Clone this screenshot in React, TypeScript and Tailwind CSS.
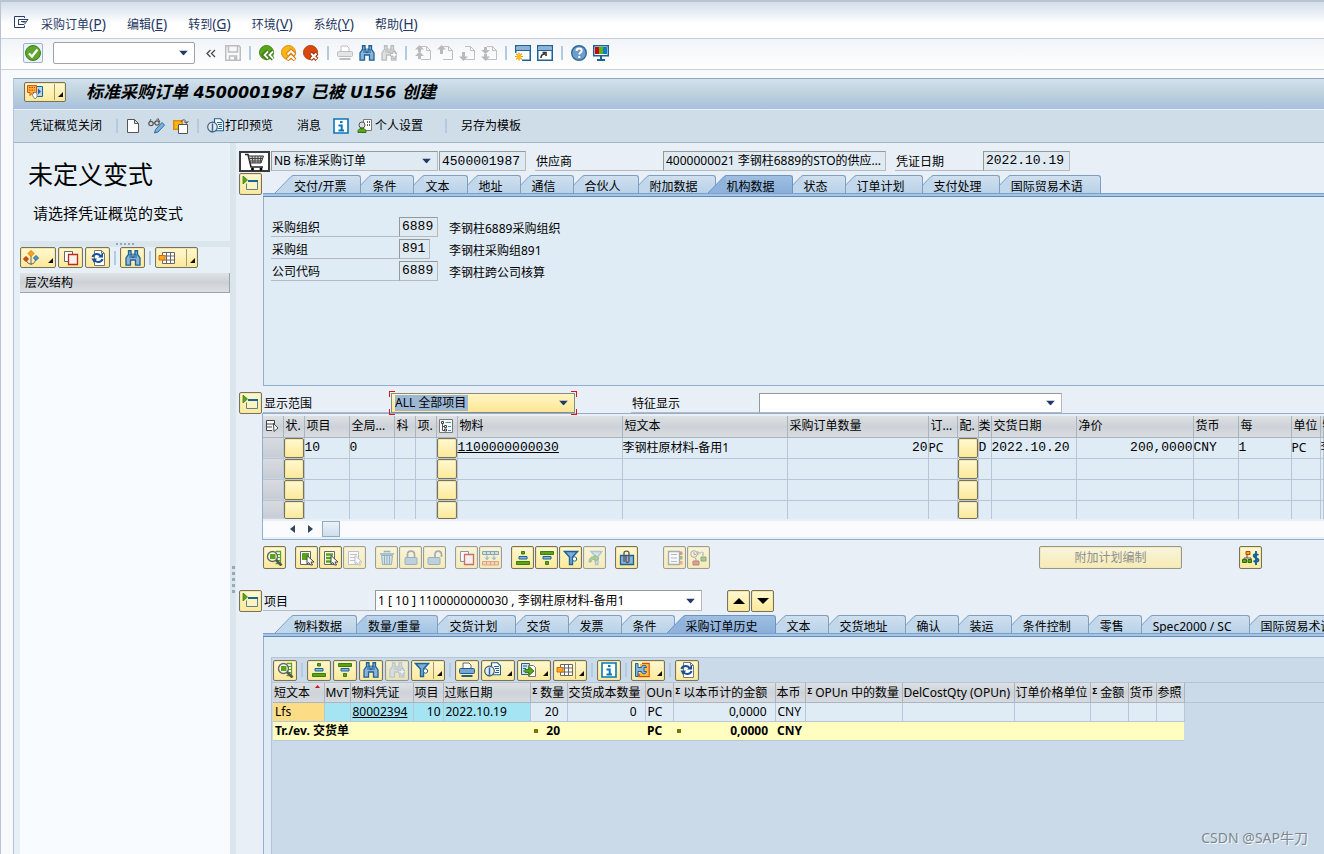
import type { ReactNode } from "react";

const YELLOW =
  "border border-[#77725c] bg-linear-to-b from-[#fff8d2] to-[#fde998] shadow-[inset_0_0_0_1px_#f6e6a4] rounded-[2px]";
const FIELD = "border border-[#b5babd] border-t-[#94999c] border-l-[#94999c]";
const MONO = "font-['Liberation_Mono','Noto_Sans_CJK_SC',monospace] text-[13px]";

/* ---------- icons ---------- */

function Svg({ children, w = 16, h = 16 }: { children: ReactNode; w?: number; h?: number }) {
  return (
    <svg width={w} height={h} viewBox={`0 0 ${w} ${h}`} fill="none" className="shrink-0" aria-hidden="true">
      {children}
    </svg>
  );
}

const IconExit = () => (
  <Svg w={15} h={12}>
    <path d="M10.500 2V.500H.500v11h10V9.500" stroke="#2b3e63" />
    <path d="M4.500 9V3.500h9.500L12 6H8.500" stroke="#2b3e63" />
    <path d="M7 5.500h4.500M4.500 8.500H10l2-2" stroke="#2b3e63" />
  </Svg>
);
const IconCheck = () => (
  <Svg>
    <circle cx="8" cy="8" r="7.500" fill="#5da52b" stroke="#3c8020" />
    <path d="M4 8.500l3 3L12.500 4.500" stroke="#fff" strokeWidth="2.400" />
  </Svg>
);
const IconSave = () => (
  <Svg>
    <path d="M.75.75h13l1.500 1.500v13H.75z" stroke="#bdbdbd" strokeWidth="1.500" />
    <path d="M3.500 1v6h9V1M4.500 15v-4h7v4" stroke="#bdbdbd" strokeWidth="1.500" />
    <path d="M9 12h2v3H9z" fill="#bdbdbd" />
  </Svg>
);
const IconBack = () => (
  <Svg>
    <circle cx="7.500" cy="7.500" r="7" fill="#58a618" stroke="#46861a" />
    <path d="M9 6l-4 4 4 4M14 6l-4 4 4 4" stroke="#3a7b16" strokeWidth="4" />
    <path d="M9 6.500L5.500 10 9 13.500M14 6.500L10.500 10l3.500 3.500" stroke="#fff" strokeWidth="1.800" />
  </Svg>
);
const IconUp = () => (
  <Svg>
    <circle cx="7.500" cy="7.500" r="7" fill="#fbb614" stroke="#d98a13" />
    <path d="M6 10l4-4 4 4M6 15l4-4 4 4" stroke="#d97f13" strokeWidth="4" />
    <path d="M6.500 9.500L10 6l3.500 3.500M6.500 14.500L10 11l3.500 3.500" stroke="#fff" strokeWidth="1.800" />
  </Svg>
);
const IconCancel = () => (
  <Svg>
    <circle cx="7.500" cy="7.500" r="7" fill="#d9480f" stroke="#b63c0d" />
    <path d="M7.500 8l6.500 6.500M14 8l-6.500 6.500" stroke="#a8330a" strokeWidth="4" />
    <path d="M8 8.500l5.500 5.500M13.500 8.500L8 14" stroke="#fff" strokeWidth="2" />
  </Svg>
);
const IconPrint = ({ off = false }: { off?: boolean }) => (
  <Svg>
    <path d="M4 6V1h6l2 2v3" fill="#fff" stroke={off ? "#bdbdbd" : "#666"} />
    <rect x=".500" y="6.500" width="15" height="5" rx="1" fill={off ? "#e4e4e4" : "#7ba5ca"} stroke={off ? "#bdbdbd" : "#1d5f91"} />
    <path d="M2.500 14h11" stroke={off ? "#bdbdbd" : "#1d5f91"} strokeWidth="2" />
  </Svg>
);
const IconFind = ({ off = false, more = false }: { off?: boolean; more?: boolean }) => {
  const line = off ? "#b9bdbd" : "#1e6296";
  const fill = off ? "#e0e0dc" : "#8db4d8";
  return (
    <Svg>
      <path d="M3.500 .750h2.500v3.500h1v3h2v-3h1V.750h2.500v3.500L15 8v7.200h-4.500V10H5.500v5.200H1V8l2.500-3.700z" fill={fill} stroke={line} strokeWidth="1.300" />
      <path d="M5 4v4M11 4v4" stroke={line} />
      {more && <path d="M9.500 8.500h2.500v-2h2v2h2v2.500h-2v2.500h-2V11H9.500z" fill="#fff" stroke="#b5b5b5" />}
    </Svg>
  );
};
const IconPage = ({ kind }: { kind: "first" | "prev" | "next" | "last" }) => (
  <Svg>
    <path d="M6 1.500h5.500l4 4V14.500H6M11.500 1.500v4h4" stroke="#c0c0c0" />
    {kind === "first" && <path d="M4.500 0l4.500 4.500H6V7H3V4.500H0zM4.500 6.500L9 11H6v3H3v-3H0z" fill="#bababa" />}
    {kind === "prev" && <path d="M4.500 0L9 4.500H6V9H3V4.500H0z" fill="#bababa" />}
    {kind === "next" && <path d="M4.500 16L9 11.500H6V7H3v4.500H0z" fill="#bababa" />}
    {kind === "last" && <path d="M4.500 16L9 11.500H6V9H3v2.500H0zM4.500 9L9 5H6V2H3v3H0z" fill="#bababa" />}
  </Svg>
);
const IconWindow = ({ link = false }: { link?: boolean }) => (
  <Svg>
    <path d="M.750.750h14.500v14.500H.750z" fill="#fff" stroke="#1d6298" strokeWidth="1.500" />
    <path d="M1.500 1.500h13V5h-13z" fill="#8cb4da" />
    <path d="M1 5.500h14" stroke="#1d6298" />
    {link ? (
      <path d="M4 13c0-3 1.500-4 4-4M5.500 7.500H9V11" stroke="#333" strokeWidth="1.600" />
    ) : (
      <>
        <path d="M0 8h7v8H0z" fill="#fff" />
        <path d="M4 7.500v8M0 11.500h8M1.200 8.700l5.600 5.600M6.800 8.700l-5.600 5.600" stroke="#f08a00" strokeWidth="1.200" />
        <circle cx="4" cy="11.500" r="2.300" fill="#ffc21a" />
      </>
    )}
  </Svg>
);
const IconHelp = () => (
  <Svg>
    <circle cx="8" cy="8" r="7.300" fill="#6f9cc8" stroke="#2c6a9e" strokeWidth="1.400" />
    <path d="M5.500 6c0-1.600 1-2.500 2.600-2.500s2.600.900 2.600 2.300c0 1.700-2.400 1.700-2.400 3.700" stroke="#fff" strokeWidth="1.900" />
    <path d="M7.300 11h2v2h-2z" fill="#fff" />
  </Svg>
);
const IconMonitor = () => (
  <Svg>
    <path d="M.750 .750h14.500v10H.750z" fill="#fff" stroke="#1d6298" strokeWidth="1.500" />
    <path d="M2 2h4v7H2z" fill="#d40000" />
    <path d="M6 2h4v7H6z" fill="#5bb512" />
    <path d="M10 2h4v7h-4z" fill="#0d7fc4" />
    <path d="M8 11v3M4 15h8" stroke="#1d6298" strokeWidth="2" />
  </Svg>
);
const IconOrder = () => (
  <Svg w={17}>
    <path d="M8.500 2.500h7v10h-7z" fill="#b9d5ea" stroke="#156aa0" />
    <path d="M11 4.500l3 3-3 3z" fill="#156aa0" />
    <path d="M.500 1.500h9v7H6l-3 3v-3H.500z" fill="#fbb03a" stroke="#d9530d" />
    <path d="M2 3.500h6M2 6h6" stroke="#c4430b" strokeDasharray="1.500 1" />
    <path d="M5 11l3-3 2 2v3l-2 2z" fill="#fff" stroke="#888" />
  </Svg>
);
const IconNew = () => (
  <Svg w={14}>
    <path d="M1.500 1.500h7l4 4v9h-11zM8.500 1.500v4h4" fill="#fff" stroke="#555" />
  </Svg>
);
const IconGlasses = () => (
  <Svg w={17}>
    <path d="M1.500 4l1.500-3M5 5h2M8.500 2l1.500-1.500L12 4" stroke="#555" />
    <circle cx="3" cy="5.500" r="2.200" stroke="#555" strokeWidth="1.200" />
    <circle cx="9" cy="5" r="2.200" stroke="#555" strokeWidth="1.200" />
    <path d="M6.500 15l1-3.500 6.500-7 2.500 2.500-6.500 7z" fill="#7fb0d8" stroke="#246b9f" />
  </Svg>
);
const IconCopyOther = () => (
  <Svg>
    <path d="M.750 2.750h8.500v8.500H.750z" fill="#fbb614" stroke="#e08b00" strokeWidth="1.500" />
    <path d="M5.500 6.500h9v9h-9z" fill="#fff" stroke="#555" />
    <path d="M8 4c1-3 5-3 5.500 1M11 3.500l2.500 2 2-2.500" stroke="#555" />
  </Svg>
);
const IconPreview = () => (
  <Svg w={17}>
    <path d="M7.500.750h6l3 3v9h-9z" fill="#fff" stroke="#1d6298" strokeWidth="1.200" />
    <path d="M10 4.500h5M11 6.500h4M12 8.500h3M11 10.500h4" stroke="#1d6298" />
    <circle cx="5.500" cy="9" r="4.800" fill="#e4edf4" stroke="#4d5a66" strokeWidth="1.200" />
    <path d="M5.500 5.500v7M3.500 13.500h3" stroke="#246b9f" strokeWidth="1.500" />
  </Svg>
);
const IconInfo = () => (
  <Svg>
    <path d="M1 1h14v14H1z" fill="#fff" stroke="#0b76b8" strokeWidth="1.600" />
    <path d="M7 4h2.500M5.500 7.500h3.200v5M5.500 12.500h5.500" stroke="#0b76b8" strokeWidth="2" />
  </Svg>
);
const IconPerson = () => (
  <Svg>
    <path d="M6.500 1.500h8v11h-8z" fill="#fff" stroke="#777" />
    <path d="M10 4h1M12 4h1M10 7h1M12 7h1" stroke="#333" strokeWidth="1.500" />
    <circle cx="5" cy="7" r="3" fill="#dedede" stroke="#555" />
    <path d="M1 14.500v-2l2-2h4l2 2v2z" fill="#58a618" stroke="#376f14" />
  </Svg>
);
const IconVariant = () => (
  <Svg>
    <path d="M8 6v9M8 14C5 14 4 12 3.500 11M8 14c3 0 4-2 4.500-4" stroke="#666" />
    <path d="M8 .500L11 3.500 8 6.500l-3-3z" fill="#f9a51a" stroke="#de7b00" />
    <path d="M3 6.500L5.500 9 3 11.500.500 9z" fill="#d9480f" stroke="#a93608" />
    <path d="M13 5.500L15.500 8 13 10.500 10.500 8z" fill="#5c93c5" stroke="#1d6298" />
  </Svg>
);
const IconCopy = () => (
  <Svg>
    <path d="M1.500 1.500h8v10h-8z" fill="#fff" stroke="#666" />
    <path d="M5.500 4.500h9v10h-9z" fill="#f7f1ef" stroke="#bd2a17" strokeWidth="1.300" />
  </Svg>
);
const IconRefresh = () => (
  <Svg>
    <path d="M4.500.500h7l3 3v12h-10zM11.500.500v3h3" fill="#fff" stroke="#777" />
    <path d="M2.500 7c1-3.500 6-4 8-1M12.500 9c-1 3.500-6 4-8 1" stroke="#17509a" strokeWidth="2" />
    <path d="M8 7.500h5V3zM7 8.500H1.500L4 13z" fill="#17509a" />
  </Svg>
);
const IconLayout = () => (
  <Svg w={17}>
    <path d="M4.500 2.500h12v11h-12zM4.500 6h12M4.500 10h12M8.500 2.500v11M12.500 2.500v11" fill="#fff" stroke="#666" />
    <path d="M1 5.500h6v4.500H1z" fill="#fba91c" stroke="#e0690c" />
  </Svg>
);
const IconExpand = () => (
  <Svg w={17}>
    <path d="M1 0l4.500 4L1 8z" fill="#58a618" stroke="#3d7d16" strokeWidth=".8" />
    <path d="M4.500 13.500v-6M4.500 13.500h11V4.500h-9" fill="#fdf3c0" stroke="#5d8193" />
    <path d="M6 5h10" stroke="#0f699f" strokeWidth="2" />
  </Svg>
);
const IconCart = () => (
  <Svg w={22} h={18}>
    <path d="M1 1.500h3L7 14h12" stroke="#222" strokeWidth="1.500" />
    <path d="M4.500 3h15L17 10H6.500z" fill="#d2d2d2" stroke="#333" />
    <path d="M8 3l1 7M11 3v7M14 3v7M17 3l-1 7M5 5.500h14M6 8h12" stroke="#444" />
    <circle cx="8.500" cy="16" r="1.500" fill="#000" />
    <circle cx="17" cy="16" r="1.500" fill="#000" />
  </Svg>
);
const IconDetail = () => (
  <Svg w={17}>
    <path d="M9.500 1.500h5v12h-5" fill="#fff" stroke="#58a618" strokeWidth="1.300" />
    <path d="M10 4.500h4M11 7.500h3M11 10.500h3" stroke="#58a618" />
    <circle cx="6.500" cy="6.500" r="5" fill="#f5f5ee" stroke="#666" strokeWidth="1.400" />
    <path d="M4 4h5.500v5H4z" fill="#58a618" />
    <path d="M10 10l5.500 5.500" stroke="#555" strokeWidth="2.600" />
  </Svg>
);
const IconSelect = ({ kind }: { kind: "block" | "all" | "none" }) => (
  <Svg>
    <path d="M1.500 1.500h10v13h-10z" fill="#fff" stroke={kind === "none" ? "#aaa" : "#666"} />
    {kind === "block" && <path d="M3 3h7v7H3z" fill="#58a618" />}
    {kind === "all" && <path d="M3 4.500h7M3 8h7M3 11.500h5" stroke="#58a618" strokeWidth="2.400" />}
    {kind === "none" && <path d="M3 4.500h7M3 7.500h7M3 10.500h5" stroke="#aaa" />}
    <path d="M8 5.500l7 6.500h-3l1.500 3h-2L10 12.500l-2 1.500z" fill="#fff" stroke={kind === "none" ? "#aaa" : "#444"} />
  </Svg>
);
const IconTrash = () => (
  <Svg>
    <path d="M5.500 2.500v-1h5v1M1 4h14" stroke="#6a93a8" strokeWidth="1.500" />
    <path d="M2.500 5.500h11l-1 9h-9z" fill="#c6d8df" stroke="#6a93a8" />
    <path d="M5.500 6v8M8 6v8M10.500 6v8" stroke="#6a93a8" />
  </Svg>
);
const IconLock = ({ open = false }: { open?: boolean }) => (
  <Svg>
    {open ? (
      <path d="M8 7.500V4.500C8 0 14.500 0 14.500 4.500V7" stroke="#888" strokeWidth="1.700" />
    ) : (
      <path d="M4.500 7.500V4.500C4.500 0 11.500 0 11.500 4.500v3" stroke="#888" strokeWidth="1.700" />
    )}
    <rect x={open ? 1 : 2} y="7.500" width="12" height="7" rx="1" fill="#a9c1cf" stroke="#6a93a8" />
  </Svg>
);
const IconTransfer = () => (
  <Svg w={17}>
    <path d="M.500 1.500h16v3H.500zM4.500 1.500v3M8.500 1.500v3M12.500 1.500v3" stroke="#547b91" fill="#c6d8df" />
    <path d="M5 5.500v4M3 7.500l2 2 2-2M12 5.500v4M10 7.500l2 2 2-2" stroke="#4f87ab" />
    <path d="M.500 11.500h16v3.500H.500zM4.500 11.500V15M8.500 11.500V15M12.500 11.500V15" stroke="#dc7a4c" fill="#f8c895" />
  </Svg>
);
const IconSort = ({ down = false }: { down?: boolean }) =>
  down ? (
    <Svg>
      <path d="M1.500 1.500h13v3h-13z" fill="#58a618" stroke="#3d7d16" />
      <path d="M4 6.500h8v2.500H4z" fill="#8cb4da" stroke="#1d6298" />
      <path d="M6.500 11.500h3v3h-3z" fill="#58a618" stroke="#3d7d16" />
    </Svg>
  ) : (
    <Svg>
      <path d="M6.500 1.500h3v2.500h-3z" fill="#58a618" stroke="#3d7d16" />
      <path d="M4 6.500h8v2.500H4z" fill="#8cb4da" stroke="#1d6298" />
      <path d="M1.500 11.500h13v3h-13z" fill="#58a618" stroke="#3d7d16" />
    </Svg>
  );
const IconFilter = ({ off = false }: { off?: boolean }) => (
  <Svg>
    <path
      d={off ? "M4 1.500h11l-4 5v8H8.500v-8z" : "M1.500 1.500h13l-5 5.500v7.500h-3V7z"}
      fill={off ? "#cddcdf" : "#7badd8"}
      stroke={off ? "#94b0b8" : "#1d6298"}
      strokeWidth="1.400"
    />
    {off ? (
      <path d="M2 12c0-4 3-6 6-5V5l4 3.500-4 3V9.500C6 9 4 10 4 12z" fill="#8cbb71" stroke="#6f9c5e" />
    ) : (
      <circle cx="11.500" cy="9" r="2.200" fill="#fff" stroke="#1d6298" />
    )}
  </Svg>
);
const IconClip = () => (
  <Svg>
    <path d="M1.500 5.500h13v9h-13z" fill="#8cb4da" stroke="#1d6298" strokeWidth="1.300" />
    <path d="M5 12V3c0-2.500 5-2.500 5 0v8c0 2-3 2-3 0V5" stroke="#555" strokeWidth="1.300" />
  </Svg>
);
const IconNotebook = () => (
  <Svg>
    <path d="M1.500 1.500h11v13h-11z" fill="#fff" stroke="#888" strokeWidth="1.400" />
    <path d="M4 4.500h6M4 8h6M4 11.500h6" stroke="#999" />
    <path d="M13 1.500h2.500V5H13z" fill="#cf6a50" />
    <path d="M13 6h2.500v3.500H13z" fill="#6f9f58" />
    <path d="M13 11h2.500v3.500H13z" fill="#ea8a5c" />
  </Svg>
);
const IconWeights = () => (
  <Svg w={17}>
    <circle cx="4" cy="4" r="3.300" stroke="#888" />
    <path d="M4 2v2.500h2M8 5V1.500l2 2 2-2M6 11V8.500h-1M13 6V2" stroke="#888" />
    <path d="M3 11h6v4H3z" fill="#d9745a" stroke="#a95040" />
    <path d="M11 7h5v4h-5z" fill="#86b86c" stroke="#578443" />
  </Svg>
);
const IconCost = () => (
  <Svg w={18}>
    <path d="M5 5v3M2 10V8h7v2" stroke="#555" />
    <path d="M4 1.500h4v3H4z" fill="#fba91c" stroke="#c63b0a" />
    <path d="M.500 9.500h4v3h-4zM6 9.500h3.500v3H6z" fill="#58a618" stroke="#2f6a12" />
    <path d="M16.500 5c-5-2.500-6.500 1.500-2.500 3s3 5-2.500 3M14 1v14" stroke="#0e62a0" strokeWidth="1.900" />
  </Svg>
);
const IconTriangle = ({ down = false }: { down?: boolean }) => (
  <Svg w={12} h={6}>
    <path d={down ? "M0 0h12L6 6z" : "M0 6h12L6 0z"} fill="#000" />
  </Svg>
);
const IconExport = () => (
  <Svg w={17}>
    <path d="M1.500 1.500h8v11h-8z" fill="#cfe0ee" stroke="#1d6298" />
    <path d="M3 4h4M3 6.500h3M3 9h3" stroke="#1d6298" />
    <path d="M8.500 3.500h5l2 2v9h-7z" fill="#fff" stroke="#777" />
    <path d="M5 7.500h4V4.500l5 4.500-5 4.500v-3H5z" fill="#58a618" stroke="#3d7d16" />
  </Svg>
);
const IconService = () => (
  <Svg w={17}>
    <path d="M8 1.500h7v13H5v-3" stroke="#dd4a0c" strokeWidth="1.600" />
    <path d="M6 2h8.500v12H6z" fill="#fdbf3a" />
    <path d="M1.500 1.500H4v4h3.500c0-3 5-3 5 0H10v4h2.500c0 3-5 3-5 0H4v5H1.500z" fill="#8cb4da" stroke="#1d6298" />
  </Svg>
);
const IconConfig = () => (
  <Svg w={14} h={14}>
    <path d="M.500.500h13v13H.500z" fill="#f4f8fb" stroke="#777" />
    <path d="M3.500 4v7.500H6M3.500 7.500H6" stroke="#555" />
    <path d="M2.500 2.500h2v2h-2zM5.500 6.500h2v2h-2zM5.500 10h2v2h-2z" fill="#fff" stroke="#444" />
    <path d="M6.500 3.500H12M9 7.500h3M9 11.500h3" stroke="#4790b8" />
  </Svg>
);
const IconColumns = () => (
  <Svg w={14} h={12}>
    <path d="M9.500 4V.500h-8v10H7M1.500 4H9M1.500 7H7" fill="#fff" stroke="#444" />
    <path d="M8.500 3.500l4.500 4.500-4 3.500z" fill="#fff" stroke="#444" />
  </Svg>
);
const Caret = () => (
  <svg width="9" height="5" viewBox="0 0 9 5" className="pointer-events-none absolute top-1/2 right-1.5 -translate-y-1/2">
    <path d="M0 0h9L4.500 5z" fill="#21396b" />
  </svg>
);

/* ---------- controls ---------- */

function BarSep() {
  return (
    <span className="flex w-1.5 shrink-0 justify-center">
      <span className="h-3.5 w-0.5 bg-[#b3cbe2]" />
    </span>
  );
}

function ToolButton({ label, children }: { label: string; children: ReactNode }) {
  return (
    <button type="button" aria-label={label} className="flex size-4 shrink-0 items-center justify-center">
      {children}
    </button>
  );
}

function YButton({
  label,
  children,
  size = "w-[23px] h-[23px]",
  off = false,
  menu = false,
  split = false,
}: {
  label: string;
  children: ReactNode;
  size?: string;
  off?: boolean;
  menu?: boolean;
  split?: boolean;
}) {
  return (
    <button
      type="button"
      aria-label={label}
      disabled={off}
      className={`relative flex shrink-0 items-center ${menu || split ? "justify-start pl-0.5" : "justify-center"} ${size} ${YELLOW} ${off ? "opacity-65" : ""}`}
    >
      {children}
      {split && <span className="absolute inset-y-px right-2.5 w-px bg-[#a79b6c]" />}
      {(menu || split) && (
        <svg width="5" height="5" viewBox="0 0 5 5" className="absolute right-0.5 bottom-1">
          <path d="M5 0v5H0z" fill="#111" />
        </svg>
      )}
    </button>
  );
}

function Select({ id, label, value, className }: { id: string; label?: string; value: string; className: string }) {
  return (
    <div className={`relative shrink-0 ${FIELD} ${className}`}>
      <select id={id} aria-label={label} className="h-full w-full appearance-none bg-transparent pr-4 pl-0.5 outline-none" defaultValue={value}>
        <option>{value}</option>
      </select>
      <Caret />
    </div>
  );
}

function Label({ id, text, className }: { id: string; text: string; className: string }) {
  return (
    <label htmlFor={id} className={`flex shrink-0 items-end self-stretch border-b border-[#b4bac0] pl-px leading-[17px] ${className}`}>
      {text}
    </label>
  );
}

function ReadField({ id, value, className }: { id: string; value: string; className: string }) {
  return <input id={id} readOnly value={value} className={`shrink-0 bg-[#dfeaf3] px-0.5 outline-none ${FIELD} ${className}`} />;
}

function Tab({ label, state, order }: { label: string; state: "idle" | "near" | "active"; order: number }) {
  const active = state === "active";
  const fill = active ? "#90b3dd" : state === "near" ? "#a9c8e6" : "#c1d7ec";
  const body = active
    ? "bg-linear-to-b from-[#9fbfe2] to-[#88aed9] border-[#6d94c1]"
    : state === "near"
      ? "bg-linear-to-b from-[#bdd5eb] to-[#a3c4e4] border-[#7f9fc0]"
      : "bg-linear-to-b from-[#cfe0ef] to-[#b9d1e8] border-[#7f9fc0]";
  return (
    <button
      type="button"
      role="tab"
      aria-selected={active}
      className="group relative -ml-2 flex h-[18px] shrink-0 first:ml-0"
      style={{ zIndex: order }}
    >
      <svg width="18" height="18" viewBox="0 0 18 18" className="shrink-0">
        <path d="M0 18L16 1.500 18 .500V18z" fill={fill} />
        <path d="M0 18L16 1.500 18 .500" fill="none" stroke={active ? "#6d94c1" : "#7f9fc0"} />
      </svg>
      <span className={`flex h-full items-center rounded-tr-[3px] border-t border-r pt-1 pr-[17px] pl-px whitespace-nowrap group-first:pr-3.5 ${body}`}>
        {label}
      </span>
    </button>
  );
}

function TabStrip({ tabs, active, near }: { tabs: string[]; active: string; near?: string }) {
  return (
    <>
      <div role="tablist" className="isolate flex overflow-hidden pt-0.5 pl-3">
        {tabs.map((t, i) => (
          <Tab
            key={t}
            label={t}
            state={t === active ? "active" : t === near ? "near" : "idle"}
            order={t === active ? tabs.length + 1 : tabs.length - i}
          />
        ))}
      </div>
      <div className="h-1 border-t border-b border-t-[#7a9fca] border-b-[#5f8cbd] bg-[#a6c4e4]" />
    </>
  );
}

function Section({ children, className = "" }: { children: ReactNode; className?: string }) {
  return (
    <section className={`flex ${className}`}>
      <div className="w-6 shrink-0">
        <YButton label="展开" size="w-[23px] h-[22px]">
          <IconExpand />
        </YButton>
      </div>
      <div className="flex min-w-0 flex-1 flex-col">{children}</div>
    </section>
  );
}

/* ---------- data ---------- */

const menus = [
  ["采购订单", "P"],
  ["编辑", "E"],
  ["转到", "G"],
  ["环境", "V"],
  ["系统", "Y"],
  ["帮助", "H"],
];

const headerTabs = ["交付/开票", "条件", "文本", "地址", "通信", "合伙人", "附加数据", "机构数据", "状态", "订单计划", "支付处理", "国际贸易术语"];

const itemTabs = [
  "物料数据", "数量/重量", "交货计划", "交货", "发票", "条件", "采购订单历史", "文本",
  "交货地址", "确认", "装运", "条件控制", "零售", "Spec2000 / SC", "国际贸易术语",
];

const orgFields = [
  { id: "org", label: "采购组织", value: "6889", width: "w-[39px]", text: "李钢柱6889采购组织" },
  { id: "group", label: "采购组", value: "891", width: "w-[31px]", text: "李钢柱采购组891" },
  { id: "company", label: "公司代码", value: "6889", width: "w-[39px]", text: "李钢柱跨公司核算" },
];

type ItemCol = { w: string; head: ReactNode; cell?: string; kind?: "row" | "button"; style?: string };

const itemCols: ItemCol[] = [
  { w: "w-5", head: <IconColumns />, kind: "row" },
  { w: "w-[21px]", head: "状.", kind: "button" },
  { w: "w-[45px]", head: "项目", cell: "10", style: MONO },
  { w: "w-[45px]", head: "全局...", cell: "0", style: MONO },
  { w: "w-[21px]", head: "科" },
  { w: "w-[21px]", head: "项." },
  { w: "w-[21px]", head: <IconConfig />, kind: "button" },
  { w: "w-[165px]", head: "物料", cell: "1100000000030", style: MONO + " underline" },
  { w: "w-[165px]", head: "短文本", cell: "李钢柱原材料-备用1" },
  { w: "w-[141px]", head: "采购订单数量", cell: "20", style: MONO + " text-right" },
  { w: "w-[29px]", head: "订...", cell: "PC" },
  { w: "w-[21px]", head: "配.", kind: "button" },
  { w: "w-[13px]", head: "类", cell: "D", style: MONO },
  { w: "w-[85px]", head: "交货日期", cell: "2022.10.20", style: MONO },
  { w: "w-[117px]", head: "净价", cell: "200,0000", style: MONO + " text-right" },
  { w: "w-[45px]", head: "货币", cell: "CNY", style: MONO },
  { w: "w-[53px]", head: "每", cell: "1", style: MONO },
  { w: "w-[29px]", head: "单位", cell: "PC" },
  { w: "", head: "物", cell: "李" },
];

type HistCol = { w: string; head: string; cell?: string; total?: string; sum?: boolean; style?: string };

const histCols: HistCol[] = [
  { w: "w-[51px]", head: "短文本", cell: "Lfs", style: "bg-[#fcdc84]" },
  { w: "w-[26px]", head: "MvT", style: "bg-[#a5e5f3]" },
  { w: "w-[63px]", head: "物料凭证", cell: "80002394", style: "bg-[#a5e5f3] underline" },
  { w: "w-[30px]", head: "项目", cell: "10", style: "bg-[#a5e5f3] text-right" },
  { w: "w-[87px]", head: "过账日期", cell: "2022.10.19", style: "bg-[#a5e5f3]" },
  { w: "w-[37px]", head: "数量", cell: "20", total: "20", sum: true, style: "text-right" },
  { w: "w-[78px]", head: "交货成本数量", cell: "0", style: "text-right" },
  { w: "w-[28px]", head: "OUn", cell: "PC", total: "PC" },
  { w: "w-[102px]", head: "以本币计的金额", cell: "0,0000", total: "0,0000", sum: true, style: "text-right" },
  { w: "w-[30px]", head: "本币", cell: "CNY", total: "CNY" },
  { w: "w-[97px]", head: "OPUn 中的数量", sum: true },
  { w: "w-[112px]", head: "DelCostQty (OPUn)" },
  { w: "w-[76px]", head: "订单价格单位" },
  { w: "w-[38px]", head: "金额", sum: true },
  { w: "w-[28px]", head: "货币" },
  { w: "w-[28px]", head: "参照" },
];

/* ---------- page parts ---------- */

function MenuBar() {
  return (
    <nav className="flex h-[37px] items-center border-b border-[#c9d0db] bg-linear-to-b from-[#d3deeb] to-white to-60% pt-2 pl-[13px] text-[#1f3864]">
      <button type="button" aria-label="系统菜单" className="mr-3 -mt-1">
        <IconExit />
      </button>
      <div className="flex gap-[21px]">
        {menus.map(([name, key]) => (
          <button type="button" key={key} className="whitespace-nowrap">
            {name}
            <span className="text-sm leading-4">
              (<span className="underline">{key}</span>)
            </span>
          </button>
        ))}
      </div>
    </nav>
  );
}

function SystemBar() {
  return (
    <div className="flex h-[31px] items-center gap-1.5 border-b border-[#c9d0db] bg-linear-to-b from-[#f1f4f8] to-white pb-0.5 pl-[22px]">
      <button type="button" aria-label="回车" className="flex size-5 items-center justify-center rounded-[2px] border border-[#9fb4cc] bg-[#edf2f8]">
        <IconCheck />
      </button>
      <div className="relative ml-1 h-[22px] w-[142px] rounded-[2px] border border-[#a0a4a8] bg-white">
        <input aria-label="命令" className="h-full w-full bg-transparent px-1 pr-4 outline-none" />
        <Caret />
      </div>
      <button type="button" aria-label="收起" className="mr-0.5 ml-1 w-3">
        <Svg w={12} h={9}>
          <path d="M5.500 1L2 4.500 5.500 8M10 1L6.500 4.500 10 8" stroke="#4a4a4a" strokeWidth="1.300" />
        </Svg>
      </button>
      <ToolButton label="保存"><IconSave /></ToolButton>
      <BarSep />
      <ToolButton label="返回"><IconBack /></ToolButton>
      <ToolButton label="退出"><IconUp /></ToolButton>
      <ToolButton label="取消"><IconCancel /></ToolButton>
      <BarSep />
      <ToolButton label="打印"><IconPrint off /></ToolButton>
      <ToolButton label="查找"><IconFind /></ToolButton>
      <ToolButton label="继续查找"><IconFind off more /></ToolButton>
      <BarSep />
      <ToolButton label="首页"><IconPage kind="first" /></ToolButton>
      <ToolButton label="上一页"><IconPage kind="prev" /></ToolButton>
      <ToolButton label="下一页"><IconPage kind="next" /></ToolButton>
      <ToolButton label="末页"><IconPage kind="last" /></ToolButton>
      <BarSep />
      <ToolButton label="新建会话"><IconWindow /></ToolButton>
      <ToolButton label="快捷方式"><IconWindow link /></ToolButton>
      <BarSep />
      <ToolButton label="帮助"><IconHelp /></ToolButton>
      <ToolButton label="布局"><IconMonitor /></ToolButton>
    </div>
  );
}

function TitleBar() {
  return (
    <header className="flex h-8 items-center border-t border-b border-t-[#8ea6c2] border-b-[#eaf2f8] bg-linear-to-b from-[#d2e1ee] via-[#bdd1dd] to-[#a8c0dc] pb-1 pl-2.5">
      <YButton label="其他采购订单" size="w-[42px] h-5" split>
        <IconOrder />
      </YButton>
      <h1 className="ml-5 font-['DejaVu_Sans','Noto_Sans_CJK_SC',sans-serif] text-base font-bold whitespace-nowrap italic">
        <span className="text-[17px] leading-6">标准采购订单</span> 4500001987 <span className="text-[17px] leading-6">已被</span> U156{" "}
        <span className="text-[17px] leading-6">创建</span>
      </h1>
    </header>
  );
}

function AppBar() {
  return (
    <div className="flex h-[33px] items-center border-b border-[#9fb6cb] bg-[#cfdde9] pl-4 whitespace-nowrap">
      <button type="button">凭证概览关闭</button>
      <span className="mr-1.5 ml-3"><BarSep /></span>
      <button type="button" aria-label="创建"><IconNew /></button>
      <button type="button" aria-label="显示/更改" className="ml-2"><IconGlasses /></button>
      <button type="button" aria-label="其他凭证" className="ml-2"><IconCopyOther /></button>
      <span className="ml-1.5"><BarSep /></span>
      <button type="button" className="ml-1.5 flex items-center gap-px"><IconPreview />打印预览</button>
      <button type="button" className="ml-6">消息</button>
      <button type="button" aria-label="信息" className="ml-3"><IconInfo /></button>
      <button type="button" className="ml-2 flex items-center gap-0.5"><IconPerson />个人设置</button>
      <span className="mr-3 ml-5"><BarSep /></span>
      <button type="button">另存为模板</button>
    </div>
  );
}

function OverviewPane() {
  return (
    <aside className="flex w-[216px] shrink-0 flex-col bg-[#e8f0f7] pl-1.5">
      <h2 className="mt-3 ml-2 text-[25px] leading-[38px]">未定义变式</h2>
      <p className="mt-2 ml-[13px] text-[15px] leading-6">请选择凭证概览的变式</p>
      <div className="mt-4 flex h-[6px] justify-center gap-0.5 bg-[#dbe5ec] pt-0.5">
        {[0, 1, 2, 3, 4].map((n) => (
          <span key={n} className="size-0.5 bg-[#98a8ba]" />
        ))}
      </div>
      <div className="flex h-[21px] items-center gap-0.5">
        <YButton label="选择变式" size="w-9 h-[21px]" menu><IconVariant /></YButton>
        <YButton label="复制" size="w-[25px] h-[21px]"><IconCopy /></YButton>
        <YButton label="刷新" size="w-[25px] h-[21px]"><IconRefresh /></YButton>
        <BarSep />
        <YButton label="查找" size="w-[25px] h-[21px]"><IconFind /></YButton>
        <BarSep />
        <YButton label="布局" size="w-[43px] h-[21px]" split><IconLayout /></YButton>
      </div>
      <div className="mt-[5px] flex h-5 items-center border-r border-b border-[#9aa5b0] bg-linear-to-b from-[#dfe3e6] via-[#cdd1d5] to-[#dcdfe2] pl-[5px]">
        层次结构
      </div>
      <div className="flex-1 bg-[#f8fbff]" />
    </aside>
  );
}

function HeaderRow() {
  return (
    <div className="flex h-[21px] items-stretch">
      <button type="button" aria-label="购物车" className="flex w-[31px] shrink-0 items-center justify-center border-2 border-[#3a3a3a] bg-white">
        <IconCart />
      </button>
      <Select id="doctype" label="订单类型" value="NB 标准采购订单" className="ml-px h-5 w-[167px] bg-[#dfeaf3]" />
      <input readOnly aria-label="采购订单" value="4500001987" className={`ml-px h-5 w-[87px] shrink-0 bg-[#dfeaf3] px-0.5 outline-none ${FIELD} ${MONO}`} />
      <div className="ml-[9px] flex h-5">
        <Label id="vendor" text="供应商" className="w-32" />
        <ReadField id="vendor" value="4000000021 李钢柱6889的STO的供应…" className="w-[223px]" />
      </div>
      <div className="ml-[9px] flex h-5">
        <Label id="docdate" text="凭证日期" className="w-[88px]" />
        <ReadField id="docdate" value="2022.10.19" className={`w-[87px] ${MONO}`} />
      </div>
    </div>
  );
}

function ItemTable() {
  return (
    <div className="-ml-px overflow-hidden border-t border-b border-l border-[#8faed0] pt-0.5 pb-0.5">
      <table className="w-full table-fixed border-collapse">
        <colgroup>
          {itemCols.map((c, i) => (
            <col key={i} className={c.w} />
          ))}
        </colgroup>
        <thead>
          <tr className="h-[21px]">
            {itemCols.map((c, i) => (
              <th
                key={i}
                className={`border-r border-b border-[#a9b4c2] bg-linear-to-b from-[#dde1e4] via-[#cdd2d8] to-[#d8dcdf] p-0 text-left font-normal whitespace-nowrap ${c.head === "类" ? "" : "pl-0.5"}`}
              >
                {c.head}
              </th>
            ))}
          </tr>
        </thead>
        <tbody>
          {[0, 1, 2, 3].map((row) => (
            <tr key={row} className={row === 3 ? "h-[19px]" : "h-[21px]"}>
              {itemCols.map((c, i) => (
                <td
                  key={i}
                  className={`border-r border-[#b9c6d5] p-0 leading-[19px] whitespace-nowrap ${row < 3 ? "border-b" : ""} ${c.kind === "row" ? "bg-linear-to-b from-[#d8dbe0] to-[#c7ccd5]" : "bg-[#dfebf5]"} ${c.style ?? ""}`}
                >
                  {c.kind === "button" && (
                    <button type="button" aria-label={`行 ${row + 1}`} className={`block w-full ${row === 3 ? "h-[18px]" : "h-5"} ${YELLOW}`} />
                  )}
                  {row === 0 && c.cell}
                </td>
              ))}
            </tr>
          ))}
        </tbody>
      </table>
      <div className="mt-0.5 flex h-4 items-center bg-[#fafbfc] pl-[27px]">
        <svg width="6" height="8" viewBox="0 0 6 8"><path d="M5 0v8L0 4z" fill="#2f4560" /></svg>
        <svg width="6" height="8" viewBox="0 0 6 8" className="ml-3"><path d="M0 0v8l5-4z" fill="#2f4560" /></svg>
        <span className="ml-2 h-4 w-[18px] border border-[#93aabf] bg-linear-to-b from-[#eaf1f8] to-[#cfdfee]" />
      </div>
    </div>
  );
}

function ItemToolbar() {
  return (
    <div className="mt-1.5 flex gap-[9px]">
      <YButton label="明细"><IconDetail /></YButton>
      <div className="flex gap-px">
        <YButton label="选择块"><IconSelect kind="block" /></YButton>
        <YButton label="全选"><IconSelect kind="all" /></YButton>
        <YButton label="取消选择" off><IconSelect kind="none" /></YButton>
      </div>
      <div className="flex gap-px">
        <YButton label="删除" off><IconTrash /></YButton>
        <YButton label="锁定" off><IconLock /></YButton>
        <YButton label="解锁" off><IconLock open /></YButton>
      </div>
      <div className="flex gap-px">
        <YButton label="复制" off><IconCopy /></YButton>
        <YButton label="传输" off><IconTransfer /></YButton>
      </div>
      <div className="flex gap-px">
        <YButton label="升序"><IconSort /></YButton>
        <YButton label="降序"><IconSort down /></YButton>
        <YButton label="过滤"><IconFilter /></YButton>
        <YButton label="取消过滤" off><IconFilter off /></YButton>
      </div>
      <YButton label="附件"><IconClip /></YButton>
      <div className="ml-4 flex gap-px">
        <YButton label="默认值" off><IconNotebook /></YButton>
        <YButton label="权重" off><IconWeights /></YButton>
      </div>
      <button type="button" disabled className={`ml-80 h-[23px] w-[143px] shrink-0 text-[#66665c] opacity-70 ${YELLOW}`}>
        附加计划编制
      </button>
      <div className="ml-12">
        <YButton label="科目分配"><IconCost /></YButton>
      </div>
    </div>
  );
}

function HistoryToolbar() {
  const std = "w-6 h-[21px]";
  const wide = "w-[34px] h-[21px]";
  return (
    <div className="flex h-[25px] items-center gap-0.5 border-b border-[#b5c5d6] pl-px">
      <YButton label="明细" size={std}><IconDetail /></YButton>
      <BarSep />
      <YButton label="升序" size={std}><IconSort /></YButton>
      <YButton label="降序" size={std}><IconSort down /></YButton>
      <YButton label="查找" size={std}><IconFind /></YButton>
      <YButton label="继续查找" size={std} off><IconFind off more /></YButton>
      <YButton label="过滤" size={wide} split><IconFilter /></YButton>
      <BarSep />
      <YButton label="打印" size={std}><IconPrint /></YButton>
      <YButton label="视图" size={wide} menu><IconPreview /></YButton>
      <YButton label="导出" size={wide} menu><IconExport /></YButton>
      <YButton label="布局" size={wide} split><IconLayout /></YButton>
      <BarSep />
      <YButton label="信息" size={std}><IconInfo /></YButton>
      <BarSep />
      <YButton label="服务" size={wide} menu><IconService /></YButton>
      <BarSep />
      <YButton label="刷新" size={std}><IconRefresh /></YButton>
    </div>
  );
}

function HistoryTable() {
  return (
    <table className="ml-px w-full table-fixed border-collapse">
      <colgroup>
        {histCols.map((c) => (
          <col key={c.head} className={c.w} />
        ))}
        <col />
      </colgroup>
      <thead>
        <tr className="h-[19px]">
          {histCols.map((c, i) => (
            <th
              key={c.head}
              className="relative border-r border-b border-[#aab5c1] bg-linear-to-b from-[#dde1e4] via-[#ced3d8] to-[#d6dade] p-0 pt-0.5 pl-px text-left leading-4 font-normal whitespace-nowrap"
            >
              <div className="flex items-center gap-[3px]">
                {c.sum && <span className="mb-1 ml-px text-[8px] leading-none font-bold">Σ</span>}
                <span>{c.head}</span>
              </div>
              {i === 0 && (
                <svg width="5" height="3" viewBox="0 0 5 3" className="absolute top-0.5 right-1"><path d="M0 3h5L2.500 0z" fill="#cf1020" /></svg>
              )}
            </th>
          ))}
          <th aria-hidden="true" className="border-b border-[#b5c5d6]" />
        </tr>
      </thead>
      <tbody>
        <tr className="h-[19px]">
          {histCols.map((c) => (
            <td key={c.head} className={`border-r border-b border-[#b9c6d5] p-0 px-0.5 leading-[17px] whitespace-nowrap ${c.sum || c.head === "交货成本数量" ? "pr-2" : ""} ${c.style?.includes("bg-") ? "" : "bg-[#dfebf5]"} ${c.style ?? ""}`}>
              {c.cell}
            </td>
          ))}
          <td />
        </tr>
        <tr className="h-[19px] bg-[#fffdc0] font-bold">
          <td colSpan={5} className="border-b border-[#b9c6d5] p-0 pl-0.5 leading-[18px]">Tr./ev. 交货单</td>
          {histCols.slice(5).map((c) => (
            <td key={c.head} className={`border-b border-[#b9c6d5] p-0 px-0.5 leading-[18px] whitespace-nowrap ${c.sum ? "pr-[7px]" : ""}`}>
              {c.sum && c.total ? (
                <span className="flex items-center justify-between pl-0.5">
                  <span className="size-1 bg-[#7c7400]" />
                  {c.total}
                </span>
              ) : (
                c.total
              )}
            </td>
          ))}
          <td className="bg-[#cbdae8]" />
        </tr>
      </tbody>
    </table>
  );
}

function FocusCorners() {
  return (
    <>
      <span className="absolute -top-[3px] -left-[3px] size-1.5 border-t border-l border-[#d8141c]" />
      <span className="absolute -top-[3px] -right-[3px] size-1.5 border-t border-r border-[#d8141c]" />
      <span className="absolute -bottom-[3px] -left-[3px] size-1.5 border-b border-l border-[#d8141c]" />
      <span className="absolute -right-[3px] -bottom-[3px] size-1.5 border-r border-b border-[#d8141c]" />
    </>
  );
}

export default function App() {
  return (
    <div className="relative flex min-h-screen flex-col overflow-hidden border-t-2 border-l border-[#b9c4d3] bg-[#f7f9fc] font-['Noto_Sans','Noto_Sans_CJK_SC',sans-serif] text-xs text-black">
      <MenuBar />
      <SystemBar />
      <div className="mt-2 ml-3 flex flex-1 flex-col border-l border-[#b4c4d6]">
        <TitleBar />
        <AppBar />
        <div className="flex flex-1">
          <OverviewPane />
          <div className="flex w-1.5 shrink-0 flex-col items-center justify-center gap-[3px] bg-[#dbe5ec] pt-[162px]">
            {[0, 1, 2, 3, 4].map((n) => (
              <span key={n} className="size-[3px] bg-[#98a8ba]" />
            ))}
          </div>
          <main className="flex min-w-0 flex-1 flex-col overflow-hidden bg-[#e8eff6] pt-2 pl-[3px]">
            <HeaderRow />
            <Section className="mt-px">
              <TabStrip tabs={headerTabs} active="机构数据" />
              <div className="flex min-h-[189px] flex-col gap-0.5 border-b border-l border-[#8faed0] bg-[#dfebf5] pt-5 pl-[7px]">
                {orgFields.map((f) => (
                  <div key={f.id} className="flex h-5 items-stretch">
                    <Label id={f.id} text={f.label} className="w-32" />
                    <ReadField id={f.id} value={f.value} className={`${f.width} ${MONO}`} />
                    <span className={`pt-1 leading-4 ${f.id === "group" ? "ml-[19px]" : "ml-[11px]"}`}>{f.text}</span>
                  </div>
                ))}
              </div>
            </Section>

            <Section className="mt-1.5">
              <div className="flex h-[21px] items-end">
                <Label id="scope" text="显示范围" className="w-32" />
                <div className="relative h-5 w-[184px] shrink-0 border border-[#8d8b7d] bg-linear-to-b from-[#fff5c4] to-[#fde795]">
                  <span className="absolute top-px left-[3px] h-4 w-[73px] bg-[#9db8d6]" />
                  <select id="scope" className="relative h-full w-full appearance-none bg-transparent pl-[3px] outline-none" defaultValue="ALL 全部项目">
                    <option>ALL 全部项目</option>
                  </select>
                  <Caret />
                  <FocusCorners />
                </div>
                <Label id="feature" text="特征显示" className="ml-14 w-32" />
                <Select id="feature" value="" className="h-5 w-[303px] bg-white" />
              </div>
              <ItemTable />
              <ItemToolbar />
            </Section>

            <Section className="mt-[21px] flex-1">
              <div className="flex h-[23px] items-start">
                <div className="flex h-[21px]">
                  <Label id="item" text="项目" className="w-28" />
                  <Select id="item" value="1 [ 10 ] 1100000000030 , 李钢柱原材料-备用1" className="w-[327px] bg-white" />
                </div>
                <div className="ml-[25px] flex gap-px">
                  <YButton label="上一项" size="w-[23px] h-[22px]"><IconTriangle /></YButton>
                  <YButton label="下一项" size="w-[23px] h-[22px]"><IconTriangle down /></YButton>
                </div>
              </div>
              <TabStrip tabs={itemTabs} active="采购订单历史" near="数量/重量" />
              <div className="flex flex-1 flex-col border-l border-[#8faed0] bg-[#dfebf5] pt-5 pl-[7px]">
                <div className="flex-1 border-t border-l border-[#b5c5d6] bg-[#cbdae8]">
                  <HistoryToolbar />
                  <HistoryTable />
                </div>
              </div>
            </Section>
          </main>
        </div>
      </div>
      <p className="absolute right-4 bottom-1.5 text-sm leading-5 text-[#7c8791] [text-shadow:1px_1px_0_#f4f7fa]">CSDN @SAP牛刀</p>
    </div>
  );
}
